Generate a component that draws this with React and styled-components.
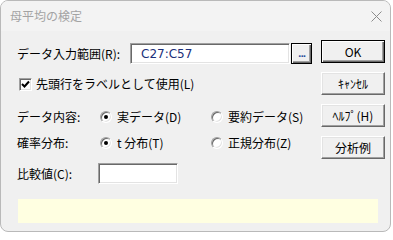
import React from "react";
import styled, { createGlobalStyle } from "styled-components";

const GlobalStyle = createGlobalStyle`
  html, body {
    margin: 0;
    padding: 0;
    background: #ffffff;
  }
  body {
    font-family: "Noto Sans CJK JP", "Noto Sans", sans-serif;
    font-size: 12px;
    color: #000;
  }
`;

const Window = styled.div`
  width: 389px;
  height: 230px;
  border: 1px solid #b9b9b9;
  border-radius: 8px;
  background: #f0f0f0;
  overflow: hidden;
  display: flex;
  flex-direction: column;
`;

const TitleBar = styled.div`
  height: 30px;
  flex: none;
  background: #f3f3f3;
  display: flex;
  align-items: center;
  justify-content: space-between;
  padding: 0 8px 0 9px;
  color: #a3a3a3;
  font-size: 12px;
  line-height: 1;
`;

const Body = styled.div`
  padding: 9px 6px 0 16px;
  display: flex;
  flex-direction: column;
`;

const Main = styled.div`
  display: flex;
  gap: 9px;
`;

const Form = styled.div`
  width: 295px;
  display: flex;
  flex-direction: column;
`;

const Row = styled.div`
  display: flex;
  align-items: center;
  height: ${(p) => p.$h || 20}px;
  margin-top: ${(p) => p.$top || 0}px;
  line-height: 1;
  white-space: nowrap;
`;

const Label = styled.span`
  width: ${(p) => p.$w}px;
  flex: none;
`;

const Sunken = styled.div`
  box-sizing: border-box;
  height: 21px;
  width: ${(p) => p.$w}px;
  background: #fff;
  border: 1px solid;
  border-color: #a0a0a0 #ffffff #ffffff #a0a0a0;
  box-shadow: inset 1px 1px #696969, inset -1px -1px #e3e3e3;
  display: flex;
  align-items: center;
  padding-left: 10px;
  font-family: "DejaVu Sans", sans-serif;
  font-size: 12px;
  color: #1b2f7a;
`;

const DotsButton = styled.div`
  box-sizing: border-box;
  margin-left: 1px;
  width: 21px;
  height: 21px;
  border: 1px solid #000;
  box-shadow: inset 1px 1px #fff, inset -1px -1px #696969, inset -2px -2px #a0a0a0;
  display: flex;
  align-items: flex-end;
  justify-content: center;
  padding-bottom: 4px;
  font-family: "DejaVu Sans", sans-serif;
  font-size: 9px;
  font-weight: bold;
  color: #2a4f9c;
  letter-spacing: -1px;
`;

const Check = styled.span`
  box-sizing: border-box;
  width: 13px;
  height: 13px;
  margin: 0 4px 0 2px;
  background: #fff;
  border: 1px solid;
  border-color: #a0a0a0 #ffffff #ffffff #a0a0a0;
  box-shadow: inset 1px 1px #696969, inset -1px -1px #e3e3e3;
  display: flex;
  align-items: center;
  justify-content: center;
`;

const Option = styled.span`
  width: ${(p) => p.$w}px;
  flex: none;
  display: flex;
  align-items: center;
`;

const Radio = styled.span`
  box-sizing: border-box;
  width: 12px;
  height: 12px;
  margin-right: 5px;
  border-radius: 50%;
  background: #fff;
  border: 1px solid;
  border-color: #a0a0a0 #ffffff #ffffff #a0a0a0;
  box-shadow: inset 1px 1px #696969, inset -1px -1px #e3e3e3;
  display: flex;
  align-items: center;
  justify-content: center;
  &::after {
    content: "";
    width: 4px;
    height: 4px;
    border-radius: 50%;
    background: ${(p) => (p.$on ? "#000" : "transparent")};
  }
`;

const Buttons = styled.div`
  display: flex;
  flex-direction: column;
  gap: 9px;
`;

const Button = styled.div`
  box-sizing: border-box;
  width: 64px;
  height: 23px;
  display: flex;
  align-items: center;
  justify-content: center;
  line-height: 1;
  font-size: 12px;
  border: 1px solid;
  border-color: ${(p) => (p.$default ? "#000" : "#ffffff #696969 #696969 #ffffff")};
  box-shadow: ${(p) =>
    p.$default
      ? "inset 1px 1px #fff, inset -1px -1px #696969, inset -2px -2px #a0a0a0"
      : "inset -1px -1px #a0a0a0, inset 1px 1px #e3e3e3"};
`;

const Status = styled.div`
  margin-top: 15px;
  margin-left: 1px;
  width: 360px;
  height: 24px;
  background: #ffffe1;
`;

const CloseIcon = () => (
  <svg width="11" height="11" viewBox="0 0 11 11">
    <path d="M0.5 0.5 L10.5 10.5 M10.5 0.5 L0.5 10.5" stroke="#8c8c8c" strokeWidth="1" />
  </svg>
);

const CheckMark = () => (
  <svg width="9" height="9" viewBox="0 0 9 9">
    <path d="M1 4 L3.5 6.5 L8 1.5" stroke="#000" strokeWidth="2" fill="none" />
  </svg>
);

export default function App() {
  return (
    <>
      <GlobalStyle />
      <Window>
        <TitleBar>
          <span>母平均の検定</span>
          <CloseIcon />
        </TitleBar>
        <Body>
          <Main>
            <Form>
              <Row $h={21} $top={3}>
                <Label $w={113}>データ入力範囲(R):</Label>
                <Sunken $w={162}>C27:C57</Sunken>
                <DotsButton>...</DotsButton>
              </Row>
              <Row $top={10}>
                <Check>
                  <CheckMark />
                </Check>
                先頭行をラベルとして使用(L)
              </Row>
              <Row $top={13}>
                <Label $w={83}>データ内容:</Label>
                <Option $w={111}>
                  <Radio $on />
                  実データ(D)
                </Option>
                <Option>
                  <Radio />
                  要約データ(S)
                </Option>
              </Row>
              <Row $top={6}>
                <Label $w={83}>確率分布:</Label>
                <Option $w={111}>
                  <Radio $on />t 分布(T)
                </Option>
                <Option>
                  <Radio />
                  正規分布(Z)
                </Option>
              </Row>
              <Row $h={21} $top={10}>
                <Label $w={81}>比較値(C):</Label>
                <Sunken $w={80} />
              </Row>
            </Form>
            <Buttons>
              <Button $default>OK</Button>
              <Button>ｷｬﾝｾﾙ</Button>
              <Button>ﾍﾙﾌﾟ(H)</Button>
              <Button>分析例</Button>
            </Buttons>
          </Main>
          <Status />
        </Body>
      </Window>
    </>
  );
}
